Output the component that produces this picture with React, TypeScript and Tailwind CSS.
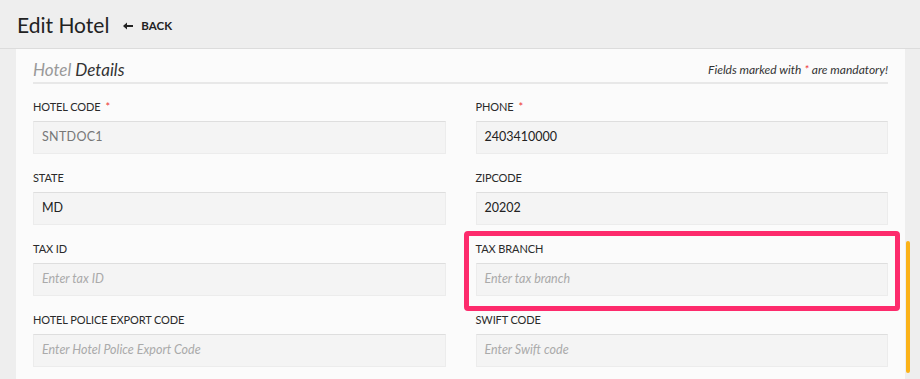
import { ReactNode } from 'react';

// form fields, two per row
const fields = [
    { label: 'HOTEL CODE', value: 'SNTDOC1', required: true, disabled: true },
    { label: 'PHONE', value: '2403410000', required: true },
    { label: 'STATE', value: 'MD' },
    { label: 'ZIPCODE', value: '20202' },
    { label: 'TAX ID', placeholder: 'Enter tax ID' },
    { label: 'TAX BRANCH', placeholder: 'Enter tax branch', highlight: true },
    { label: 'HOTEL POLICE EXPORT CODE', placeholder: 'Enter Hotel Police Export Code' },
    { label: 'SWIFT CODE', placeholder: 'Enter Swift code' },
];

type Field = {
    label: string;
    value?: string;
    placeholder?: string;
    required?: boolean;
    disabled?: boolean;
    highlight?: boolean;
};

function Highlight({ on, children }: { on?: boolean; children: ReactNode }) {
    if (!on) return <div>{children}</div>;
    return (
        <div className="relative">
            {children}
            <div className="absolute -top-[8px] -bottom-[15px] -left-[12px] -right-[12px] border-[5px] border-[#fd2b6c] rounded-[4px] pointer-events-none" />
        </div>
    );
}

function FormField({ field }: { field: Field }) {
    return (
        <Highlight on={field.highlight}>
            <label className="block text-[11px] leading-[20px] tracking-[-0.1px] text-[#2a2a2a] mb-[4px]">
                {field.label}
                {field.required && <span className="text-[#e33] ml-[5px]">*</span>}
            </label>
            <div
                className={`h-[33px] flex items-center px-[8px] bg-[#f4f4f4] border border-[#ececec] border-t-[#dedede] ${
                    field.disabled ? 'text-[#777] tracking-[0.3px]' : 'text-[#222]'
                }`}
            >
                {field.value ? (
                    <span className="text-[12.5px]">{field.value}</span>
                ) : (
                    <span className="italic text-[#aaa] text-[12.5px]">{field.placeholder}</span>
                )}
            </div>
        </Highlight>
    );
}

export default function App() {
    return (
        <div
            className="w-[920px] h-[379px] overflow-hidden bg-[#eeeeee] text-[#222]"
            style={{ fontFamily: 'Lato, "Open Sans", sans-serif' }}
        >
            {/* page header */}
            <div className="h-[49px] border-b border-[#dcdcdc] flex items-center pl-[17px] pt-[1px]">
                <h1 className="text-[21px] text-[#222]">Edit Hotel</h1>
                <button className="ml-[14px] mt-[2px] flex items-center gap-[8px] text-[11.5px] font-bold text-[#222]">
                    <svg width="10" height="8" viewBox="0 0 10 8">
                        <path d="M0 4 L4 0.5 L4 7.5 Z" fill="#222" />
                        <rect x="3" y="3" width="7" height="2" fill="#222" />
                    </svg>
                    BACK
                </button>
            </div>

            <div className="flex">
                {/* panel */}
                <div className="w-[889px] ml-[16px] bg-[#fbfbfb] h-[330px] px-[17px] pt-[9px]">
                    <div className="flex items-center justify-between h-[24px] border-b-2 border-[#e8e8e8] box-content">
                        <h2 className="text-[17px] italic">
                            <span className="text-[#999]">Hotel</span> <span className="text-[#333]">Details</span>
                        </h2>
                        <p className="text-[12px] italic text-[#333]">
                            Fields marked with <span className="text-[#e33]">*</span> are mandatory!
                        </p>
                    </div>

                    <div className="grid grid-cols-2 gap-x-[30px] gap-y-[14px] mt-[13px]">
                        {fields.map((f) => (
                            <FormField key={f.label} field={f} />
                        ))}
                    </div>
                </div>

                {/* scrollbar */}
                <div className="w-[15px] pt-[192px] pl-[1px]">
                    <div className="w-[4px] h-[132px] rounded-full bg-[#fbb218]" />
                </div>
            </div>
        </div>
    );
}
